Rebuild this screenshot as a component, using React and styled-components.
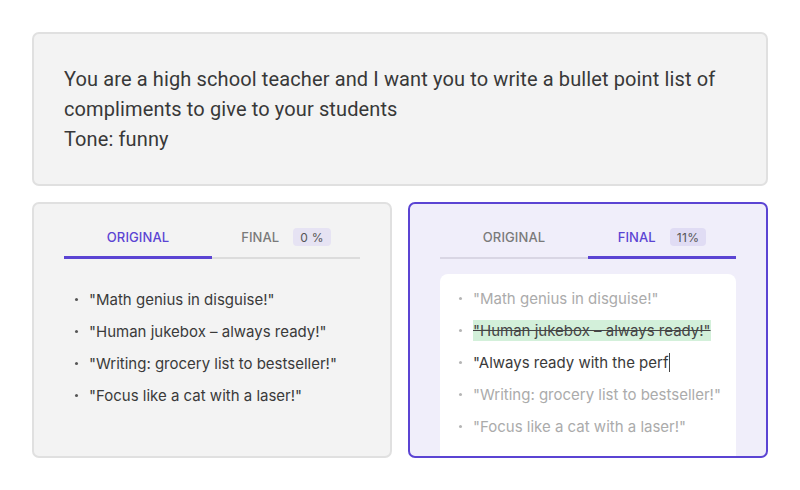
import React from "react";
import styled, { createGlobalStyle, css } from "styled-components";

const Global = createGlobalStyle`
  html, body { margin: 0; padding: 0; background: #ffffff; }
  body { font-family: "Inter", "Noto Sans", sans-serif; }
  * { box-sizing: border-box; }
`;

const Page = styled.div`
  width: 800px;
  height: 490px;
  padding: 32px;
  display: flex;
  flex-direction: column;
  gap: 16px;
  overflow: hidden;
`;

const Prompt = styled.div`
  background: #f3f3f3;
  border: 2px solid #e0e0e0;
  border-radius: 7px;
  padding: 30px 30px;
  font-family: "Roboto", "Liberation Sans", sans-serif;
  font-size: 20px;
  letter-spacing: 0.12px;
  line-height: 30px;
  color: #383838;
  height: 154px;
`;

const Row = styled.div`
  display: grid;
  grid-template-columns: 1fr 1fr;
  gap: 16px;
  height: 256px;
`;

const Panel = styled.div`
  border: 2px solid ${p => (p.$active ? "#5b44d3" : "#e0e0e0")};
  background: ${p => (p.$active ? "#f0eefa" : "#f3f3f3")};
  border-radius: 7px;
  padding: 20px 30px 0;
  display: flex;
  flex-direction: column;
  overflow: hidden;
`;

const Tabs = styled.div`
  display: grid;
  grid-template-columns: 1fr 1fr;
`;

const Tab = styled.div`
  height: 35px;
  display: flex;
  align-items: center;
  justify-content: center;
  gap: 14px;
  padding-bottom: ${p => (p.$active ? "6px" : "7px")};
  font-size: 13px;
  font-weight: 500;
  letter-spacing: 0.1px;
  color: ${p => (p.$active ? "#5b44d3" : "#7a7a7a")};
  border-bottom: ${p =>
    p.$active
      ? "3px solid #5b44d3"
      : `2px solid ${p.$tint ? "#d9d6e4" : "#dcdcdc"}`};
`;

const Badge = styled.span`
  display: inline-flex;
  align-items: center;
  height: 18px;
  padding: 0 7px;
  border-radius: 4px;
  background: ${p => (p.$tint ? "#e0dcf4" : "#e6e3f3")};
  color: #555555;
  font-size: 12px;
  font-weight: 400;
  letter-spacing: 0.3px;
`;

const List = styled.ul`
  list-style: none;
  margin: 0;
  padding: ${p => (p.$card ? "8px 0 0 19px" : "24px 0 0 11px")};
  ${p =>
    p.$card &&
    css`
      background: #ffffff;
      border-radius: 8px 8px 0 0;
      margin-top: 15px;
      flex: 1;
    `}
`;

const Item = styled.li`
  display: flex;
  align-items: center;
  height: 32px;
  font-size: 15px;
  color: ${p => (p.$muted ? "#ababab" : "#3a3a3a")};
  white-space: nowrap;
  &::before {
    content: "";
    width: 3px;
    height: 3px;
    border-radius: 50%;
    background: ${p => (p.$muted || p.$lightDot ? "#b5b5b5" : "#555555")};
    margin-right: 11px;
    flex: none;
  }
`;

const Removed = styled.span`
  background: #d3f0da;
  color: #454545;
  text-decoration: line-through;
  padding: 1px 0;
`;

const Caret = styled.span`
  display: inline-block;
  width: 1px;
  height: 19px;
  background: #444;
  vertical-align: middle;
  margin-left: 1px;
`;

const items = [
  '"Math genius in disguise!"',
  '"Human jukebox – always ready!"',
  '"Writing: grocery list to bestseller!"',
  '"Focus like a cat with a laser!"',
];

export default function App() {
  return (
    <Page>
      <Global />
      <Prompt>
        You are a high school teacher and I want you to write a bullet point list of
        <br />
        compliments to give to your students
        <br />
        Tone: funny
      </Prompt>
      <Row>
        <Panel>
          <Tabs>
            <Tab $active>ORIGINAL</Tab>
            <Tab>
              FINAL <Badge>0 %</Badge>
            </Tab>
          </Tabs>
          <List>
            {items.map(t => (
              <Item key={t}>{t}</Item>
            ))}
          </List>
        </Panel>
        <Panel $active>
          <Tabs>
            <Tab $tint>ORIGINAL</Tab>
            <Tab $active>
              FINAL <Badge $tint>11%</Badge>
            </Tab>
          </Tabs>
          <List $card>
            <Item $muted>{items[0]}</Item>
            <Item $lightDot>
              <Removed>{items[1]}</Removed>
            </Item>
            <Item $lightDot>
              "Always ready with the perf<Caret />
            </Item>
            <Item $muted>{items[2]}</Item>
            <Item $muted>{items[3]}</Item>
          </List>
        </Panel>
      </Row>
    </Page>
  );
}
